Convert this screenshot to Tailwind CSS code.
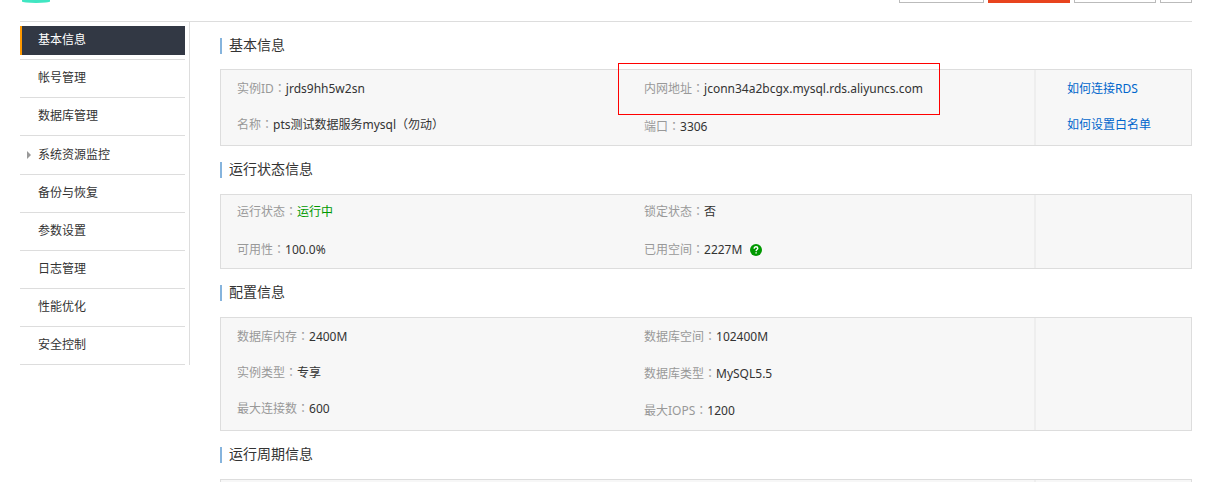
<!DOCTYPE html>
<html lang="zh-CN">
<head>
<meta charset="utf-8">
<meta name="viewport" content="width=device-width, initial-scale=1">
<title>基本信息</title>
<script src="https://cdn.jsdelivr.net/npm/@tailwindcss/browser@4"></script>
</head>
<body class="bg-white font-['Noto_Sans','Noto_Sans_CJK_SC',sans-serif] text-xs text-[#333]">
<div class="pl-5 pr-[30px]">
  <header class="flex h-[22px] items-start justify-between border-b border-[#ddd]">
    <div class="ml-0.5 h-[3px] w-7 rounded-b-[50%] bg-[#40e6c2]"></div>
    <div class="flex gap-1">
      <button type="button" aria-label="登录数据库" class="h-[3px] w-[85px] border border-t-0 border-[#bbb]"></button>
      <button type="button" aria-label="创建实例" class="h-[3px] w-[82px] bg-[#e8441e]"></button>
      <button type="button" aria-label="备份实例" class="h-[3px] w-[82px] border border-t-0 border-[#bbb]"></button>
      <button type="button" aria-label="更多" class="h-[3px] w-8 border border-t-0 border-[#bbb]"></button>
    </div>
  </header>

  <div class="flex items-start">
    <nav class="w-[170px] shrink-0 border-r border-[#ddd] pr-1">
      <ul class="leading-[18px]">
        <li class="border-b border-[#ddd] py-1"><a href="#" aria-current="page" class="flex h-[29px] items-center border-l-2 border-[#ff9900] bg-[#323844] pb-0.5 pl-4 text-white">基本信息</a></li>
        <li class="border-b border-[#ddd]"><a href="#" class="flex h-[37px] items-center pb-px pl-[18px]">帐号管理</a></li>
        <li class="border-b border-[#ddd]"><a href="#" class="flex h-[37px] items-center pb-px pl-[18px]">数据库管理</a></li>
        <li class="border-b border-[#ddd]"><a href="#" class="flex h-[38px] items-center pb-px pl-[7px]"><svg class="mr-[7px] h-2 w-1" viewBox="0 0 4 8" aria-hidden="true"><path d="M0 0L4 4L0 8Z" fill="#999"/></svg>系统资源监控</a></li>
        <li class="border-b border-[#ddd]"><a href="#" class="flex h-[37px] items-center pb-px pl-[18px]">备份与恢复</a></li>
        <li class="border-b border-[#ddd]"><a href="#" class="flex h-[37px] items-center pb-px pl-[18px]">参数设置</a></li>
        <li class="border-b border-[#ddd]"><a href="#" class="flex h-[37px] items-center pb-px pl-[18px]">日志管理</a></li>
        <li class="border-b border-[#ddd]"><a href="#" class="flex h-[37px] items-center pb-px pl-[18px]">性能优化</a></li>
        <li class="border-b border-[#ddd]"><a href="#" class="flex h-[37px] items-center pb-px pl-[18px]">安全控制</a></li>
      </ul>
    </nav>

    <main class="ml-[30px] min-w-0 flex-1">
      <section>
        <h2 class="mt-4 mb-[15px] border-l-2 border-[#86b4dd] pb-0.5 pl-[7px] text-sm leading-[14px]">基本信息</h2>
        <div class="grid grid-cols-[407fr_406fr_157fr] border border-[#ddd] bg-[#f7f7f7] leading-[18px] whitespace-nowrap">
          <dl class="flex flex-col gap-[18px] pt-[9px] pl-4">
            <div class="flex h-[18px] items-baseline"><dt class="text-[#999]">实例ID<span class="font-['Noto_Sans_CJK_TC',sans-serif]" lang="zh-TW">：</span></dt><dd>jrds9hh5w2sn</dd></div>
            <div class="flex h-[18px] items-baseline"><dt class="text-[#999]">名称<span class="font-['Noto_Sans_CJK_TC',sans-serif]" lang="zh-TW">：</span></dt><dd>pts测试数据服务mysql<span class="font-['Noto_Sans_CJK_TC',sans-serif]" lang="zh-TW">（</span>勿动<span class="font-['Noto_Sans_CJK_TC',sans-serif]" lang="zh-TW">）</span></dd></div>
          </dl>
          <dl class="flex flex-col items-start gap-5 pt-[9px] pb-2.5 pl-4">
            <div class="relative flex h-[18px] items-baseline"><dt class="text-[#999]">内网地址<span class="font-['Noto_Sans_CJK_TC',sans-serif]" lang="zh-TW">：</span></dt><dd>jconn34a2bcgx.mysql.rds.aliyuncs.com<span class="pointer-events-none absolute -top-4 -right-[17px] -bottom-[18px] -left-[26px] border border-[#ff0000]"></span></dd></div>
            <div class="flex h-[18px] items-baseline"><dt class="text-[#999]">端口<span class="font-['Noto_Sans_CJK_TC',sans-serif]" lang="zh-TW">：</span></dt><dd>3306</dd></div>
          </dl>
          <div class="flex flex-col items-start gap-[18px] border-l-2 border-[#eee] pt-2.5 pl-[31px] text-[#0066cc]">
            <a href="#">如何连接RDS</a>
            <a href="#">如何设置白名单</a>
          </div>
        </div>
      </section>

      <section>
        <h2 class="my-4 border-l-2 border-[#86b4dd] pb-0.5 pl-[7px] text-sm leading-[14px]">运行状态信息</h2>
        <div class="grid grid-cols-[407fr_406fr_157fr] border border-[#ddd] bg-[#f7f7f7] leading-[18px] whitespace-nowrap">
          <dl class="flex flex-col gap-5 pt-[7px] pb-2.5 pl-4">
            <div class="flex h-[18px] items-baseline"><dt class="text-[#999]">运行状态<span class="font-['Noto_Sans_CJK_TC',sans-serif]" lang="zh-TW">：</span></dt><dd class="text-[#009900]">运行中</dd></div>
            <div class="flex h-[18px] items-baseline"><dt class="text-[#999]">可用性<span class="font-['Noto_Sans_CJK_TC',sans-serif]" lang="zh-TW">：</span></dt><dd>100.0%</dd></div>
          </dl>
          <dl class="flex flex-col gap-5 pt-[7px] pb-2.5 pl-4">
            <div class="flex h-[18px] items-baseline"><dt class="text-[#999]">锁定状态<span class="font-['Noto_Sans_CJK_TC',sans-serif]" lang="zh-TW">：</span></dt><dd>否</dd></div>
            <div class="flex h-[18px] items-baseline"><dt class="text-[#999]">已用空间<span class="font-['Noto_Sans_CJK_TC',sans-serif]" lang="zh-TW">：</span></dt><dd class="flex items-center gap-2">2227M
              <svg class="size-3" viewBox="0 0 12 12" role="img" aria-label="帮助"><circle cx="6" cy="6" r="6" fill="#009900"/><path d="M4.2 4.7C4.2 3.4 5 2.8 6 2.8S7.8 3.5 7.8 4.4C7.8 5.5 6.2 5.7 6.1 7.1M6.1 8.2V9.6" fill="none" stroke="#fff" stroke-width="1.4"/></svg></dd></div>
          </dl>
          <div class="border-l-2 border-[#eee]"></div>
        </div>
      </section>

      <section>
        <h2 class="my-4 border-l-2 border-[#86b4dd] pb-0.5 pl-[7px] text-sm leading-[14px]">配置信息</h2>
        <div class="grid grid-cols-[407fr_406fr_157fr] border border-[#ddd] bg-[#f7f7f7] leading-[18px] whitespace-nowrap">
          <dl class="flex flex-col gap-[18px] pt-[9px] pl-4">
            <div class="flex h-[18px] items-baseline"><dt class="text-[#999]">数据库内存<span class="font-['Noto_Sans_CJK_TC',sans-serif]" lang="zh-TW">：</span></dt><dd>2400M</dd></div>
            <div class="flex h-[18px] items-baseline"><dt class="text-[#999]">实例类型<span class="font-['Noto_Sans_CJK_TC',sans-serif]" lang="zh-TW">：</span></dt><dd>专享</dd></div>
            <div class="flex h-[18px] items-baseline"><dt class="text-[#999]">最大连接数<span class="font-['Noto_Sans_CJK_TC',sans-serif]" lang="zh-TW">：</span></dt><dd>600</dd></div>
          </dl>
          <dl class="flex flex-col gap-[19px] pt-[9px] pb-[11px] pl-4">
            <div class="flex h-[18px] items-baseline"><dt class="text-[#999]">数据库空间<span class="font-['Noto_Sans_CJK_TC',sans-serif]" lang="zh-TW">：</span></dt><dd>102400M</dd></div>
            <div class="flex h-[18px] items-baseline"><dt class="text-[#999]">数据库类型<span class="font-['Noto_Sans_CJK_TC',sans-serif]" lang="zh-TW">：</span></dt><dd>MySQL5.5</dd></div>
            <div class="flex h-[18px] items-baseline"><dt class="text-[#999]">最大IOPS<span class="font-['Noto_Sans_CJK_TC',sans-serif]" lang="zh-TW">：</span></dt><dd>1200</dd></div>
          </dl>
          <div class="border-l-2 border-[#eee]"></div>
        </div>
      </section>

      <section>
        <h2 class="mt-4 mb-4 border-l-2 border-[#86b4dd] pb-0.5 pl-[7px] text-sm leading-[14px]">运行周期信息</h2>
        <div class="grid h-[3px] grid-cols-[407fr_406fr_157fr] border border-b-0 border-[#ddd] bg-[#f7f7f7]">
          <div class="col-start-3 border-l-2 border-[#eee]"></div>
        </div>
      </section>
    </main>
  </div>
</div>
</body>
</html>
